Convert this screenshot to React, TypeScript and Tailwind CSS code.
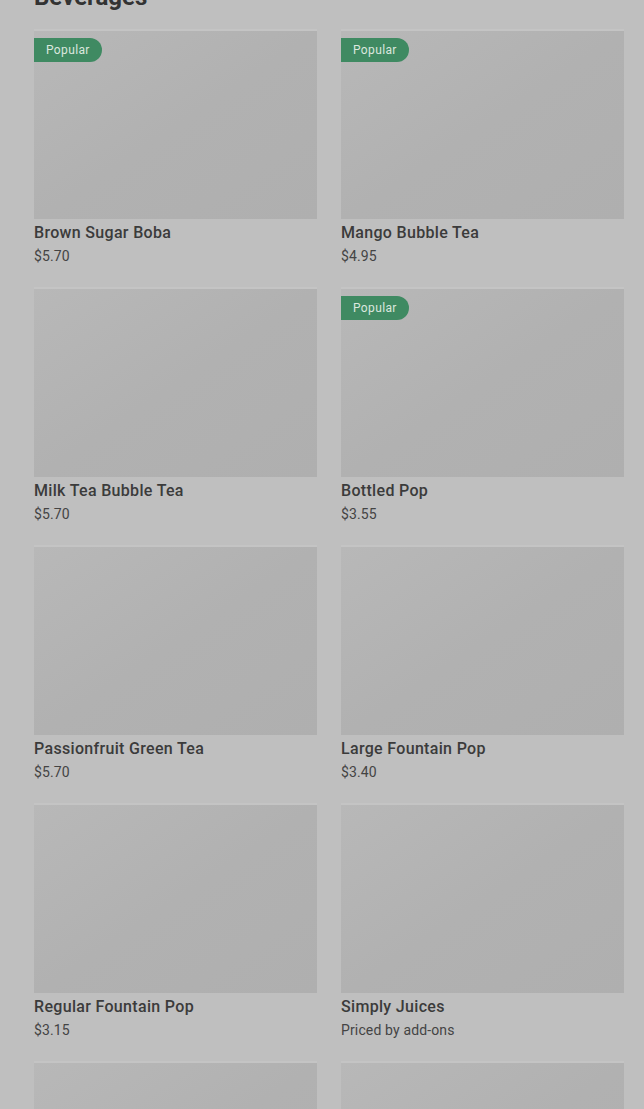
const items = [
  { name: 'Brown Sugar Boba', price: '$5.70', popular: true },
  { name: 'Mango Bubble Tea', price: '$4.95', popular: true },
  { name: 'Milk Tea Bubble Tea', price: '$5.70', popular: false },
  { name: 'Bottled Pop', price: '$3.55', popular: true },
  { name: 'Passionfruit Green Tea', price: '$5.70', popular: false },
  { name: 'Large Fountain Pop', price: '$3.40', popular: false },
  { name: 'Regular Fountain Pop', price: '$3.15', popular: false },
  { name: 'Simply Juices', price: 'Priced by add-ons', popular: false },
  { name: 'Lemonade', price: '$3.15', popular: false },
  { name: 'Iced Tea', price: '$3.15', popular: false },
];

function ItemCard({ name, price, popular }: { name: string; price: string; popular: boolean }) {
  return (
    <div className="flex flex-col">
      <div className="relative h-[190px] border-t-2 border-[#c4c4c4] bg-gradient-to-br from-[#b8b8b8] via-[#b1b1b1] to-[#afafaf]">
        {popular && (
          <span className="absolute left-0 top-[7px] flex h-6 items-center rounded-r-full bg-[#3f8a62] px-3 text-[12px] tracking-[0.03em] text-[#dbe7df]">
            Popular
          </span>
        )}
      </div>
      <h3 className="mt-0.5 text-[16px] font-medium leading-6 tracking-[0.02em] text-[#3b3b3b]">{name}</h3>
      <p className="text-[14px] leading-[22px] tracking-[0.01em] text-[#444444]">{price}</p>
    </div>
  );
}

export default function App() {
  return (
    <div className="h-[1109px] overflow-hidden bg-[#bfbfbf] pl-[34px] pr-[20px] font-['Roboto',sans-serif]">
      <h2 className="-mt-[19px] text-[24px] font-bold leading-8 text-[#333333]">Beverages</h2>
      <div className="mt-4 grid grid-cols-2 gap-x-6 gap-y-5">
        {items.map((item) => (
          <ItemCard key={item.name} {...item} />
        ))}
      </div>
    </div>
  );
}
